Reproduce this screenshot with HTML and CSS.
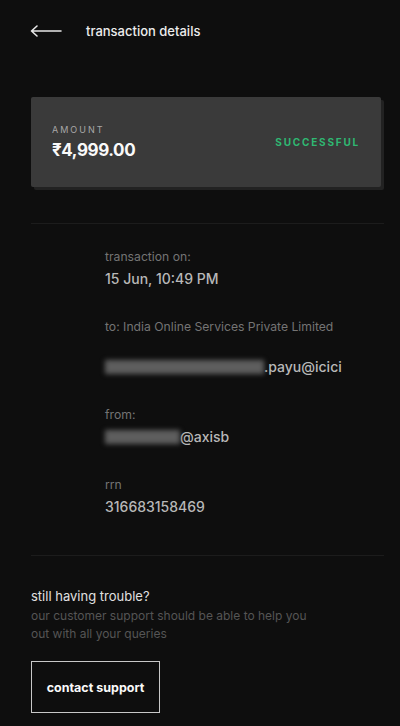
FILE: index.html
```html
<!DOCTYPE html>
<html>
<head>
  <meta charset="UTF-8">
  <title>transaction details</title>
  <link rel="stylesheet" href="styles.css">
</head>
<body>
  <div class="page">
    <div class="header">
      <svg class="back" width="32" height="14" viewBox="0 0 32 14">
        <path d="M1.5 7 H31 M1.5 7 L7 2 M1.5 7 L7 12" stroke="#e8e8e8" stroke-width="1.6" fill="none" stroke-linecap="round"/>
      </svg>
      <span class="title">transaction details</span>
    </div>

    <div class="card">
      <div>
        <div class="card-label">AMOUNT</div>
        <div class="card-amount">₹4,999.00</div>
      </div>
      <div class="status">SUCCESSFUL</div>
    </div>

    <hr class="divider">

    <div class="details">
      <div class="row">
        <div class="label">transaction on:</div>
        <div class="value">15 Jun, 10:49 PM</div>
      </div>
      <div class="row">
        <div class="label">to: India Online Services Private Limited</div>
        <div class="value value-gap"><span class="redact redact-long"></span>.payu@icici</div>
      </div>
      <div class="row">
        <div class="label">from:</div>
        <div class="value"><span class="redact redact-short"></span>@axisb</div>
      </div>
      <div class="row">
        <div class="label">rrn</div>
        <div class="value">316683158469</div>
      </div>
    </div>

    <hr class="divider divider-bottom">

    <div class="help">
      <div class="help-title">still having trouble?</div>
      <div class="help-text">our customer support should be able to help you out with all your queries</div>
      <button class="support">contact support</button>
    </div>
  </div>
</body>
</html>
```

FILE: styles.css
```css
body {
  margin: 0;
  background-color: #0e0e0e;
  color: #e8e8e8;
  font-family: Inter, "Noto Sans", sans-serif;
}
.page {
  padding: 0 16px 0 31px;
}
.header {
  display: flex;
  align-items: center;
  height: 62px;
}
.back {
  margin-right: 24px;
  margin-left: -1px;
}
.title {
  font-size: 13px;
  font-weight: 500;
  color: #ececec;
}
.card {
  margin-top: 35px;
  height: 90px;
  background-color: #3a3a3a;
  border-radius: 2px;
  box-shadow: 3px 3px 0 #222;
  display: flex;
  justify-content: space-between;
  align-items: center;
  padding: 0 21px 0 21px;
  box-sizing: border-box;
  margin-right: 3px;
}
.card-label {
  font-size: 9px;
  letter-spacing: 2px;
  color: #a8a8a8;
  margin-bottom: 5px;
}
.card-amount {
  font-size: 17px;
  font-weight: 700;
  color: #fafafa;
  letter-spacing: -0.4px;
}
.status {
  font-size: 10px;
  font-weight: 700;
  letter-spacing: 1.8px;
  color: #2fb872;
}
.divider {
  border: none;
  border-top: 1px solid #1c1c1c;
  margin: 36px 0 0 0;
}
.details {
  padding: 25px 0 0 74px;
}
.row {
  margin-bottom: 30px;
}
.row:last-child {
  margin-bottom: 0;
}
.label {
  font-size: 12.2px;
  color: #747474;
  line-height: 16px;
}
.value {
  font-size: 14px;
  font-weight: 500;
  color: #b8b8b8;
  line-height: 20px;
  margin-top: 4px;
  display: flex;
  align-items: center;
}
.value-gap {
  margin-top: 22px;
}
.redact {
  display: inline-block;
  height: 14px;
  background-color: #5e5e5e;
  filter: blur(2.5px);
}
.redact-long {
  width: 159px;
}
.redact-short {
  width: 75px;
}
.divider-bottom {
  margin-top: 38px;
}
.help {
  padding-top: 31px;
}
.help-title {
  font-size: 13px;
  color: #e0e0e0;
  line-height: 18px;
}
.help-text {
  font-size: 12px;
  color: #555;
  line-height: 18px;
  width: 290px;
  margin-top: 2px;
}
.support {
  margin-top: 18px;
  width: 129px;
  height: 52px;
  background: transparent;
  border: 1.5px solid #c8c8c8;
  color: #fafafa;
  font-family: inherit;
  font-size: 12.5px;
  font-weight: 700;
  cursor: pointer;
}
```
